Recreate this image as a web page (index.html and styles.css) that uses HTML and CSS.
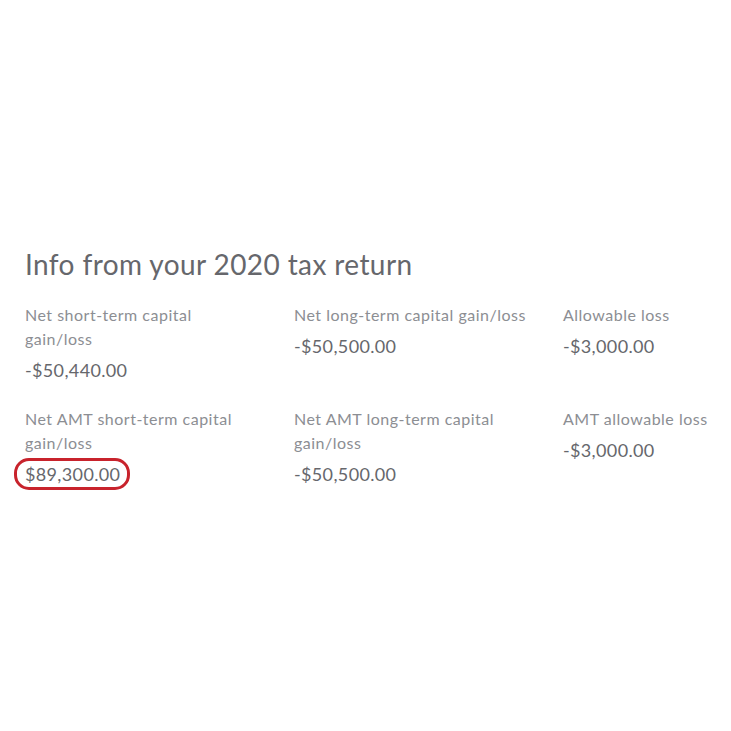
FILE: index.html
```html
<!DOCTYPE html>
<html lang="en">
<head>
<meta charset="utf-8">
<link rel="stylesheet" href="styles.css">
<title>Info from your 2020 tax return</title>
</head>
<body>
<main class="page">
  <h1 class="title">Info from your 2020 tax return</h1>
  <div class="grid">
    <div class="item">
      <div class="label">Net short-term capital gain/loss</div>
      <div class="value">-$50,440.00</div>
    </div>
    <div class="item">
      <div class="label">Net long-term capital gain/loss</div>
      <div class="value">-$50,500.00</div>
    </div>
    <div class="item">
      <div class="label">Allowable loss</div>
      <div class="value">-$3,000.00</div>
    </div>
    <div class="item">
      <div class="label">Net AMT short-term capital gain/loss</div>
      <div class="value"><span class="circled">$89,300.00</span></div>
    </div>
    <div class="item">
      <div class="label">Net AMT long-term capital gain/loss</div>
      <div class="value">-$50,500.00</div>
    </div>
    <div class="item">
      <div class="label">AMT allowable loss</div>
      <div class="value">-$3,000.00</div>
    </div>
  </div>
</main>
</body>
</html>
```
FILE: styles.css
```css
html, body {
  margin: 0;
  padding: 0;
  background: #ffffff;
}
body {
  width: 731px;
  height: 731px;
  font-family: "Lato", "Noto Sans", sans-serif;
}
.page {
  padding: 244px 0 0 25px;
}
.title {
  margin: 0;
  font-size: 28px;
  line-height: 40px;
  font-weight: 400;
  letter-spacing: 0.4px;
  color: #66676c;
}
.grid {
  margin-top: 19px;
  display: grid;
  grid-template-columns: 269px 269px 168px;
  row-gap: 24px;
}
.item {
  padding-right: 34px;
}
.item:nth-child(3n) {
  padding-right: 0;
}
.label {
  font-size: 16px;
  line-height: 24px;
  letter-spacing: 0.5px;
  color: #8c8e93;
}
.value {
  margin-top: 6px;
  font-size: 18px;
  line-height: 26px;
  letter-spacing: 0.35px;
  color: #66676c;
}
.circled {
  position: relative;
}
.circled::before {
  content: "";
  position: absolute;
  left: -11px;
  right: -10px;
  top: -5px;
  bottom: -5px;
  border: 3px solid #c8232c;
  border-radius: 15px;
}
```
